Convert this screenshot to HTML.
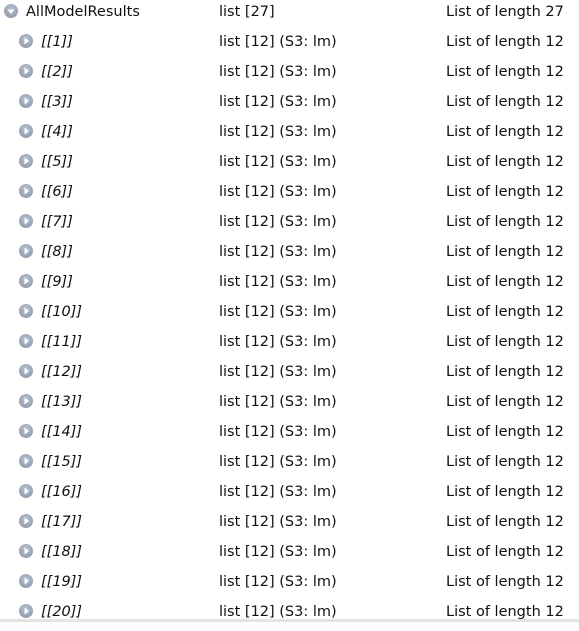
<!DOCTYPE html>
<html><head><style>
body{margin:0;width:579px;height:622px;background:#fff;overflow:hidden;position:relative;font-family:"DejaVu Sans","Liberation Sans",sans-serif;font-size:14.5px;color:#111}
.r{position:absolute;left:0;width:579px;height:30px}
.r span{position:absolute;top:3px;white-space:nowrap}
.ic{position:absolute;top:3px;width:14px;height:14px;border-radius:50%;background:radial-gradient(circle at 50% 35%,#b8c1d0,#8792a6)}
.ic svg{position:absolute;left:0;top:0}
i{font-style:italic}
.bot{position:absolute;left:0;top:619px;width:579px;height:3px;background:#e4e4e4}
</style></head><body>
<div class="r" style="top:1px">
<div class="ic" style="left:4px"><svg width="14" height="14"><path d="M3.5 5.5 L10.5 5.5 L7 10 Z" fill="#fff"/></svg></div>
<span style="left:26px">AllModelResults</span><span style="left:219px">list [27]</span><span style="left:446px">List of length 27</span></div>
<div class="r" style="top:31px"><div class="ic" style="left:19px"><svg width="14" height="14"><path d="M5.5 3.5 L10 7 L5.5 10.5 Z" fill="#fff"/></svg></div><span style="left:41px"><i>[[1]]</i></span><span style="left:219px">list [12] (S3: lm)</span><span style="left:446px">List of length 12</span></div>
<div class="r" style="top:61px"><div class="ic" style="left:19px"><svg width="14" height="14"><path d="M5.5 3.5 L10 7 L5.5 10.5 Z" fill="#fff"/></svg></div><span style="left:41px"><i>[[2]]</i></span><span style="left:219px">list [12] (S3: lm)</span><span style="left:446px">List of length 12</span></div>
<div class="r" style="top:91px"><div class="ic" style="left:19px"><svg width="14" height="14"><path d="M5.5 3.5 L10 7 L5.5 10.5 Z" fill="#fff"/></svg></div><span style="left:41px"><i>[[3]]</i></span><span style="left:219px">list [12] (S3: lm)</span><span style="left:446px">List of length 12</span></div>
<div class="r" style="top:121px"><div class="ic" style="left:19px"><svg width="14" height="14"><path d="M5.5 3.5 L10 7 L5.5 10.5 Z" fill="#fff"/></svg></div><span style="left:41px"><i>[[4]]</i></span><span style="left:219px">list [12] (S3: lm)</span><span style="left:446px">List of length 12</span></div>
<div class="r" style="top:151px"><div class="ic" style="left:19px"><svg width="14" height="14"><path d="M5.5 3.5 L10 7 L5.5 10.5 Z" fill="#fff"/></svg></div><span style="left:41px"><i>[[5]]</i></span><span style="left:219px">list [12] (S3: lm)</span><span style="left:446px">List of length 12</span></div>
<div class="r" style="top:181px"><div class="ic" style="left:19px"><svg width="14" height="14"><path d="M5.5 3.5 L10 7 L5.5 10.5 Z" fill="#fff"/></svg></div><span style="left:41px"><i>[[6]]</i></span><span style="left:219px">list [12] (S3: lm)</span><span style="left:446px">List of length 12</span></div>
<div class="r" style="top:211px"><div class="ic" style="left:19px"><svg width="14" height="14"><path d="M5.5 3.5 L10 7 L5.5 10.5 Z" fill="#fff"/></svg></div><span style="left:41px"><i>[[7]]</i></span><span style="left:219px">list [12] (S3: lm)</span><span style="left:446px">List of length 12</span></div>
<div class="r" style="top:241px"><div class="ic" style="left:19px"><svg width="14" height="14"><path d="M5.5 3.5 L10 7 L5.5 10.5 Z" fill="#fff"/></svg></div><span style="left:41px"><i>[[8]]</i></span><span style="left:219px">list [12] (S3: lm)</span><span style="left:446px">List of length 12</span></div>
<div class="r" style="top:271px"><div class="ic" style="left:19px"><svg width="14" height="14"><path d="M5.5 3.5 L10 7 L5.5 10.5 Z" fill="#fff"/></svg></div><span style="left:41px"><i>[[9]]</i></span><span style="left:219px">list [12] (S3: lm)</span><span style="left:446px">List of length 12</span></div>
<div class="r" style="top:301px"><div class="ic" style="left:19px"><svg width="14" height="14"><path d="M5.5 3.5 L10 7 L5.5 10.5 Z" fill="#fff"/></svg></div><span style="left:41px"><i>[[10]]</i></span><span style="left:219px">list [12] (S3: lm)</span><span style="left:446px">List of length 12</span></div>
<div class="r" style="top:331px"><div class="ic" style="left:19px"><svg width="14" height="14"><path d="M5.5 3.5 L10 7 L5.5 10.5 Z" fill="#fff"/></svg></div><span style="left:41px"><i>[[11]]</i></span><span style="left:219px">list [12] (S3: lm)</span><span style="left:446px">List of length 12</span></div>
<div class="r" style="top:361px"><div class="ic" style="left:19px"><svg width="14" height="14"><path d="M5.5 3.5 L10 7 L5.5 10.5 Z" fill="#fff"/></svg></div><span style="left:41px"><i>[[12]]</i></span><span style="left:219px">list [12] (S3: lm)</span><span style="left:446px">List of length 12</span></div>
<div class="r" style="top:391px"><div class="ic" style="left:19px"><svg width="14" height="14"><path d="M5.5 3.5 L10 7 L5.5 10.5 Z" fill="#fff"/></svg></div><span style="left:41px"><i>[[13]]</i></span><span style="left:219px">list [12] (S3: lm)</span><span style="left:446px">List of length 12</span></div>
<div class="r" style="top:421px"><div class="ic" style="left:19px"><svg width="14" height="14"><path d="M5.5 3.5 L10 7 L5.5 10.5 Z" fill="#fff"/></svg></div><span style="left:41px"><i>[[14]]</i></span><span style="left:219px">list [12] (S3: lm)</span><span style="left:446px">List of length 12</span></div>
<div class="r" style="top:451px"><div class="ic" style="left:19px"><svg width="14" height="14"><path d="M5.5 3.5 L10 7 L5.5 10.5 Z" fill="#fff"/></svg></div><span style="left:41px"><i>[[15]]</i></span><span style="left:219px">list [12] (S3: lm)</span><span style="left:446px">List of length 12</span></div>
<div class="r" style="top:481px"><div class="ic" style="left:19px"><svg width="14" height="14"><path d="M5.5 3.5 L10 7 L5.5 10.5 Z" fill="#fff"/></svg></div><span style="left:41px"><i>[[16]]</i></span><span style="left:219px">list [12] (S3: lm)</span><span style="left:446px">List of length 12</span></div>
<div class="r" style="top:511px"><div class="ic" style="left:19px"><svg width="14" height="14"><path d="M5.5 3.5 L10 7 L5.5 10.5 Z" fill="#fff"/></svg></div><span style="left:41px"><i>[[17]]</i></span><span style="left:219px">list [12] (S3: lm)</span><span style="left:446px">List of length 12</span></div>
<div class="r" style="top:541px"><div class="ic" style="left:19px"><svg width="14" height="14"><path d="M5.5 3.5 L10 7 L5.5 10.5 Z" fill="#fff"/></svg></div><span style="left:41px"><i>[[18]]</i></span><span style="left:219px">list [12] (S3: lm)</span><span style="left:446px">List of length 12</span></div>
<div class="r" style="top:571px"><div class="ic" style="left:19px"><svg width="14" height="14"><path d="M5.5 3.5 L10 7 L5.5 10.5 Z" fill="#fff"/></svg></div><span style="left:41px"><i>[[19]]</i></span><span style="left:219px">list [12] (S3: lm)</span><span style="left:446px">List of length 12</span></div>
<div class="r" style="top:601px"><div class="ic" style="left:19px"><svg width="14" height="14"><path d="M5.5 3.5 L10 7 L5.5 10.5 Z" fill="#fff"/></svg></div><span style="left:41px"><i>[[20]]</i></span><span style="left:219px">list [12] (S3: lm)</span><span style="left:446px">List of length 12</span></div>
<div class="bot"></div>
</body></html>
